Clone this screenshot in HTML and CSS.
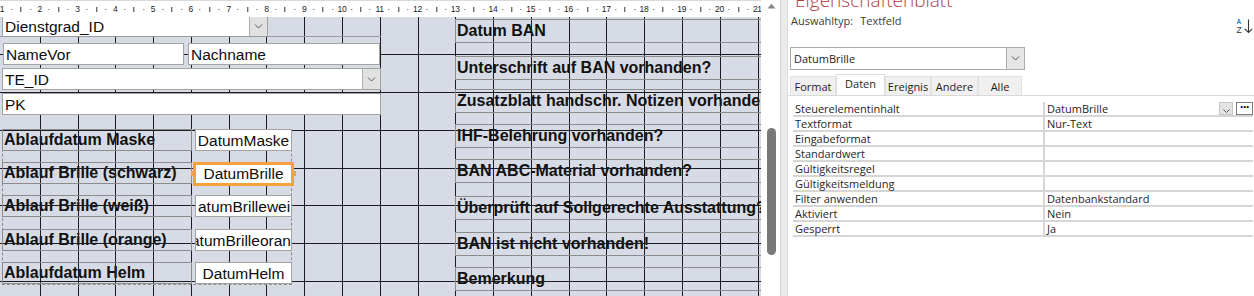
FILE: index.html
```html
<!DOCTYPE html>
<html lang="de">
<head>
<meta charset="utf-8">
<title>Formularentwurf</title>
<link rel="stylesheet" href="styles.css">
</head>
<body>
<div class="app">
  <div class="designer">
    <div class="ruler">
      <span class="cm"><span class="n">1</span><span class="d"></span><span class="b"></span><span class="d"></span></span>
      <span class="cm"><span class="n">2</span><span class="d"></span><span class="b"></span><span class="d"></span></span>
      <span class="cm"><span class="n">3</span><span class="d"></span><span class="b"></span><span class="d"></span></span>
      <span class="cm"><span class="n">4</span><span class="d"></span><span class="b"></span><span class="d"></span></span>
      <span class="cm"><span class="n">5</span><span class="d"></span><span class="b"></span><span class="d"></span></span>
      <span class="cm"><span class="n">6</span><span class="d"></span><span class="b"></span><span class="d"></span></span>
      <span class="cm"><span class="n">7</span><span class="d"></span><span class="b"></span><span class="d"></span></span>
      <span class="cm"><span class="n">8</span><span class="d"></span><span class="b"></span><span class="d"></span></span>
      <span class="cm"><span class="n">9</span><span class="d"></span><span class="b"></span><span class="d"></span></span>
      <span class="cm"><span class="n">10</span><span class="d"></span><span class="b"></span><span class="d"></span></span>
      <span class="cm"><span class="n">11</span><span class="d"></span><span class="b"></span><span class="d"></span></span>
      <span class="cm"><span class="n">12</span><span class="d"></span><span class="b"></span><span class="d"></span></span>
      <span class="cm"><span class="n">13</span><span class="d"></span><span class="b"></span><span class="d"></span></span>
      <span class="cm"><span class="n">14</span><span class="d"></span><span class="b"></span><span class="d"></span></span>
      <span class="cm"><span class="n">15</span><span class="d"></span><span class="b"></span><span class="d"></span></span>
      <span class="cm"><span class="n">16</span><span class="d"></span><span class="b"></span><span class="d"></span></span>
      <span class="cm"><span class="n">17</span><span class="d"></span><span class="b"></span><span class="d"></span></span>
      <span class="cm"><span class="n">18</span><span class="d"></span><span class="b"></span><span class="d"></span></span>
      <span class="cm"><span class="n">19</span><span class="d"></span><span class="b"></span><span class="d"></span></span>
      <span class="cm"><span class="n">20</span><span class="d"></span><span class="b"></span><span class="d"></span></span>
      <span class="cm"><span class="n">21</span><span class="d"></span><span class="b"></span><span class="d"></span></span>
    </div>
    <div class="form">
      <!-- top stacked controls -->
      <div class="ctl c-dienst">Dienstgrad_ID<span class="cbtn"><svg width="9" height="5" viewBox="0 0 9 5"><path d="M1 0.5l3.5 3.5L8 0.5" fill="none" stroke="#555" stroke-width="1"/></svg></span></div>
      <div class="guide g1"></div>
      <div class="ctl c-vor">NameVor</div>
      <div class="ctl c-nach">Nachname</div>
      <div class="ctl c-te">TE_ID<span class="cbtn"><svg width="9" height="5" viewBox="0 0 9 5"><path d="M1 0.5l3.5 3.5L8 0.5" fill="none" stroke="#555" stroke-width="1"/></svg></span></div>
      <div class="ctl c-pk">PK</div>

      <!-- left label/field group -->
      <div class="grp"></div>
      <div class="lbl r1">Ablaufdatum Maske</div>
      <div class="lbl r2">Ablauf Brille (schwarz)</div>
      <div class="lbl r3">Ablauf Brille (weiß)</div>
      <div class="lbl r4">Ablauf Brille (orange)</div>
      <div class="lbl r5">Ablaufdatum Helm</div>
      <div class="ctl tbx r1 center">DatumMaske</div>
      <div class="ctl sel center">DatumBrille</div>
      <div class="ctl tbx r3">atumBrillewei</div>
      <div class="ctl tbx r4 clip">atumBrilleoran</div>
      <div class="ctl tbx r5 center">DatumHelm</div>

      <!-- right labels -->
      <div class="rl q1">Datum BAN</div>
      <div class="rl q2">Unterschrift auf BAN vorhanden?</div>
      <div class="rl q3">Zusatzblatt handschr. Notizen vorhanden?</div>
      <div class="rl q4">IHF-Belehrung vorhanden?</div>
      <div class="rl q5">BAN ABC-Material vorhanden?</div>
      <div class="rl q6">Überprüft auf Sollgerechte Ausstattung?</div>
      <div class="rl q7">BAN ist nicht vorhanden!</div>
      <div class="rl q8">Bemerkung</div>

      <svg class="grid" width="761" height="279" viewBox="0 0 761 279" shape-rendering="crispEdges">
        <path d="M40.5 0V279M78.5 0V279M115.5 0V279M153.5 0V279M191.5 0V279M229.5 0V279M266.5 0V279M304.5 0V279M342.5 0V279M380.5 0V279M418.5 0V279M455.5 0V279M493.5 0V279M531.5 0V279M569.5 0V279M606.5 0V279M644.5 0V279M682.5 0V279M720.5 0V279M758.5 0V279M0 37.5H761M0 75.5H761M0 113.5H761M0 151.5H761M0 188.5H761M0 226.5H761M0 264.5H761" stroke="#1b1d22" stroke-width="1" fill="none"/>
      </svg>
    </div>
  </div>

  <div class="vscroll">
    <svg class="up" width="9" height="6" viewBox="0 0 9 6"><path d="M0.5 5.5L4.5 0.8L8.5 5.5Z" fill="#858585"/></svg>
    <div class="thumb"></div>
  </div>

  <div class="divider"></div>

  <div class="props">
    <div class="ps-title">Eigenschaftenblatt</div>
    <div class="ps-sub">
      <div class="ps-type">Auswahltyp:<span class="ps-val">Textfeld</span></div>
      <svg class="sorticon" width="17" height="16" viewBox="0 0 17 16">
        <text x="0.5" y="6" font-family="Liberation Sans, sans-serif" font-size="6.5" font-weight="bold" fill="#2b7bd0">A</text>
        <text x="0.5" y="14.5" font-family="Liberation Sans, sans-serif" font-size="8.5" fill="#333">Z</text>
        <path d="M12.5 1.5V14.5M8.8 10.8l3.7 3.7 3.7-3.7" fill="none" stroke="#333" stroke-width="1.1"/>
      </svg>
    </div>
    <div class="objsel">
      <span>DatumBrille</span>
      <span class="objbtn"><svg width="9" height="5" viewBox="0 0 9 5"><path d="M1 0.5l3.5 3.5L8 0.5" fill="none" stroke="#555" stroke-width="1"/></svg></span>
    </div>
    <div class="tabs">
      <span class="tab t-format">Format</span>
      <span class="tab active t-daten">Daten</span>
      <span class="tab t-ereignis">Ereignis</span>
      <span class="tab t-andere">Andere</span>
      <span class="tab t-alle">Alle</span>
    </div>
    <div class="ptable">
      <div class="prow"><span class="pk">Steuerelementinhalt</span><span class="pv">DatumBrille<span class="pbtns"><span class="pdrop"><svg width="7" height="4" viewBox="0 0 7 4"><path d="M0.5 0.5l3 3 3-3" fill="none" stroke="#555" stroke-width="1"/></svg></span><span class="pdots">···</span></span></span></div>
      <div class="prow"><span class="pk">Textformat</span><span class="pv">Nur-Text</span></div>
      <div class="prow"><span class="pk">Eingabeformat</span><span class="pv"></span></div>
      <div class="prow"><span class="pk">Standardwert</span><span class="pv"></span></div>
      <div class="prow"><span class="pk">Gültigkeitsregel</span><span class="pv"></span></div>
      <div class="prow"><span class="pk">Gültigkeitsmeldung</span><span class="pv"></span></div>
      <div class="prow"><span class="pk">Filter anwenden</span><span class="pv">Datenbankstandard</span></div>
      <div class="prow"><span class="pk">Aktiviert</span><span class="pv">Nein</span></div>
      <div class="prow"><span class="pk">Gesperrt</span><span class="pv">Ja</span></div>
    </div>
  </div>
</div>
</body>
</html>
```

FILE: styles.css
```css
* { box-sizing: border-box; }
html, body { margin: 0; padding: 0; }
body {
  width: 1254px;
  height: 296px;
  overflow: hidden;
  background: #fff;
  font-family: "Liberation Sans", Arial, sans-serif;
}
.app { display: flex; width: 1254px; height: 296px; }

/* ---------- designer ---------- */
.designer { width: 761px; flex: none; display: flex; flex-direction: column; }
.ruler {
  height: 17px;
  flex: none;
  display: flex;
  padding-left: 2px;
  background: #fff;
  border-top: 1px solid #d9d9d9;
  overflow: hidden;
}
.cm { flex: none; width: 37.78px; height: 100%; display: flex; }
.cm > span {
  flex: none;
  width: 25%;
  height: 100%;
  display: flex;
  align-items: center;
  justify-content: center;
  transform: translateX(-50%);
}
.n { font-size: 8.5px; color: #1c1c1c; letter-spacing: -0.3px; }
.d::before { content: ""; width: 1px; height: 1px; background: #555; }
.b::before { content: ""; width: 1px; height: 5px; background: #333; }

.form {
  position: relative;
  z-index: 0;
  flex: 1;
  background: #d6dbe5;
  overflow: hidden;
}
.grid { position: absolute; left: 0; top: 0; z-index: 2; }

.ctl {
  position: absolute;
  z-index: 3;
  background: #fff;
  border: 1px solid #a3a3a3;
  font-size: 15.5px;
  color: #0d0d0d;
  line-height: 19px;
  padding: 1px 2px 0;
  white-space: nowrap;
  overflow: hidden;
  height: 22px;
}
.cbtn {
  position: absolute;
  right: 0;
  top: 0;
  bottom: 0;
  width: 18px;
  background: #e1e1e1;
  border-left: 1px solid #adadad;
  display: flex;
  align-items: center;
  justify-content: center;
}
.c-dienst { left: 2px; top: -2px; width: 266px; }
.c-vor { left: 3px; top: 26px; width: 181px; }
.c-nach { left: 188px; top: 26px; width: 192px; }
.c-te { left: 2px; top: 51px; width: 379px; }
.c-pk { left: 2px; top: 76px; width: 379px; }
.guide { position: absolute; z-index: 3; height: 1px; background: #9b9b9b; }
.g1 { left: 0; top: 19px; width: 381px; }

.grp {
  position: absolute;
  z-index: 3;
  left: 2px;
  top: 112px;
  width: 290px;
  height: 156px;
  border: 1px dashed #8d8d8d;
}
.lbl {
  position: absolute;
  left: 2px;
  width: 190px;
  height: 22px;
  padding-left: 2px;
  font-weight: bold;
  font-size: 16px;
  line-height: 22px;
  color: #111;
  white-space: nowrap;
}
.lbl::after, .rl::after {
  content: "";
  position: absolute;
  inset: 0;
  z-index: 3;
  border: 1px solid #8c8c8c;
}
.r1 { top: 112px; }
.r2 { top: 145px; }
.r3 { top: 178px; }
.r4 { top: 212px; }
.r5 { top: 245px; }
.tbx { left: 195px; width: 97px; }
.center { text-align: center; padding-left: 0; padding-right: 0; }
.clip { text-indent: -7px; }
.sel {
  left: 193px;
  top: 145px;
  width: 101px;
  height: 24px;
  border: 3px solid #f6a23a;
  padding: 0;
  line-height: 18px;
  overflow: visible;
}
.sel::before, .sel::after {
  content: "";
  position: absolute;
  top: 6px;
  width: 3px;
  height: 5px;
  background: #f6a23a;
}
.sel::before { left: -5px; }
.sel::after { right: -5px; }

.rl {
  position: absolute;
  left: 455px;
  width: 330px;
  height: 24px;
  padding-left: 2px;
  font-weight: bold;
  font-size: 16px;
  line-height: 24px;
  color: #111;
  white-space: nowrap;
}
.q1 { top: 2px; }
.q2 { top: 39px; }
.q3 { top: 72px; }
.q4 { top: 107px; }
.q5 { top: 142px; }
.q6 { top: 179px; }
.q7 { top: 215px; }
.q8 { top: 250px; }

/* ---------- scrollbar ---------- */
.vscroll {
  width: 19px;
  flex: none;
  background: #fff;
  display: flex;
  flex-direction: column;
  align-items: center;
  padding-left: 1px;
}
.up { margin-top: 3px; flex: none; }
.thumb {
  margin-top: 119px;
  width: 9px;
  height: 127px;
  border-radius: 5px;
  background: #787878;
}
.divider {
  width: 8px;
  flex: none;
  background: #ebebeb;
  border-left: 1px solid #d2d2d2;
  border-right: 1px solid #dadada;
}

/* ---------- property sheet ---------- */
.props {
  width: 466px;
  flex: none;
  font-family: "Open Sans", "Noto Sans", sans-serif;
  font-size: 11px;
  color: #262626;
}
.ps-title {
  margin-top: -10px;
  height: 20px;
  margin-left: 7px;
  font-weight: 300;
  font-size: 19px;
  line-height: 20px;
  color: #b2403f;
  white-space: nowrap;
}
.ps-sub {
  margin-top: 3px;
  height: 15px;
  display: flex;
  justify-content: space-between;
  align-items: flex-start;
  padding-left: 3px;
}
.ps-type { line-height: 15px; color: #3d3d3d; }
.ps-val { margin-left: 7px; }
.sorticon { margin-top: 5px; margin-right: 1px; flex: none; }

.objsel {
  margin-top: 19px;
  margin-left: 2px;
  width: 235px;
  height: 23px;
  border: 1px solid #a9a9a9;
  display: flex;
  align-items: center;
  justify-content: space-between;
  padding-left: 3px;
  line-height: 15px;
  color: #1e1e1e;
}
.objbtn {
  width: 18px;
  height: 21px;
  background: #e6e6e6;
  border-left: 1px solid #adadad;
  display: flex;
  align-items: center;
  justify-content: center;
}

.tabs {
  margin-top: 4px;
  height: 22px;
  display: flex;
  align-items: flex-end;
  padding-left: 2px;
  border-bottom: 1px solid #d9d9d9;
}
.tab {
  height: 19px;
  line-height: 19px;
  text-align: center;
  background: #f0f0f0;
  border: 1px solid #e2e2e2;
  border-bottom: none;
  color: #1e1e1e;
}
.tab.active {
  height: 21px;
  background: #fff;
  border-color: #dcdcdc;
  line-height: 17px;
}
.t-format { width: 46px; }
.t-daten { width: 49px; }
.t-ereignis { width: 46px; }
.t-andere { width: 47px; }
.t-alle { width: 44px; }

.ptable { margin-top: 6px; margin-left: 5px; width: 460px; }
.prow {
  display: grid;
  grid-template-columns: 250px 1fr;
  height: 15px;
  border-bottom: 2px solid #d6d6d6;
  line-height: 13px;
}
.pk { padding-left: 2px; white-space: nowrap; }
.pv {
  border-left: 2px solid #d6d6d6;
  padding-left: 2px;
  white-space: nowrap;
  display: flex;
}
.pbtns { margin-left: auto; display: flex; gap: 3px; }
.pdrop {
  width: 14px;
  height: 13px;
  background: #e4e4e4;
  border: 1px solid #c6c6c6;
  display: flex;
  align-items: flex-end;
  justify-content: center;
  padding-bottom: 1px;
}
.pdots {
  width: 17px;
  height: 13px;
  border: 1px solid #7c7c7c;
  background: #fff;
  font-family: "Liberation Sans", sans-serif;
  font-weight: bold;
  font-size: 12px;
  line-height: 9px;
  text-align: center;
  color: #000;
  letter-spacing: -1px;
}
```
